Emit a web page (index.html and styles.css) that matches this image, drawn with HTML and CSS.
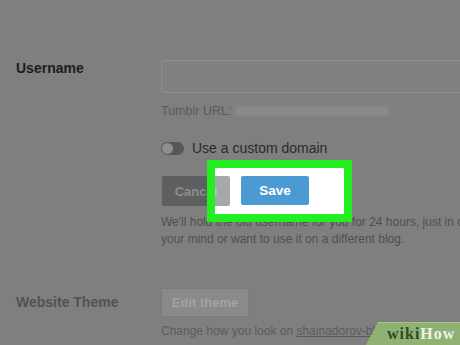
FILE: index.html
```html
<!DOCTYPE html>
<html lang="en">
<head>
<meta charset="UTF-8" />
<meta name="viewport" content="width=device-width, initial-scale=1" />
<title>Account settings</title>
<link rel="stylesheet" href="styles.css">
</head>
<body>
<div class="page">
  <div class="row">
    <div class="label">Username</div>
    <div class="field">
      <input type="text" class="text-input" />
      <div class="hint">Tumblr URL: <span class="blurred"></span></div>
      <div class="toggle-row">
        <span class="toggle"><span class="knob"></span></span>
        <span>Use a custom domain</span>
      </div>
      <div class="buttons">
        <div class="spot-fill"></div>
        <button class="btn cancel">Cancel</button>
        <button class="btn save">Save</button>
        <div class="spot-frame"></div>
      </div>
      <p class="note">We'll hold the old username for you for 24 hours, just in case you change your mind or want to use it on a different blog.</p>
    </div>
  </div>

  <div class="row theme-row">
    <div class="label muted">Website Theme</div>
    <div class="field">
      <button class="btn edit">Edit theme</button>
      <div class="hint change">Change how you look on <u>shainadorov-blog.tumblr.com</u></div>
    </div>
  </div>
</div>

<div class="wikihow"><span class="wiki">wiki</span><span class="how">How</span></div>
</body>
</html>
```

FILE: styles.css
```css
body {
  margin: 0;
  background: #7f7f7f;
  font-family: 'Liberation Sans', Arial, sans-serif;
  color: #2b2b2b;
  overflow: hidden;
  width: 460px;
  height: 345px;
}
.page {
  padding-top: 60px;
}
.row {
  display: flex;
}
.label {
  width: 161px;
  flex-shrink: 0;
  box-sizing: border-box;
  padding-left: 16px;
  font-size: 14px;
  font-weight: bold;
  line-height: 17px;
  color: #1c1c1c;
}
.label.muted {
  color: #525252;
  padding-top: 6px;
}
.field {
  width: 400px;
  flex-shrink: 0;
}
.text-input {
  display: block;
  width: 100%;
  height: 33px;
  box-sizing: border-box;
  margin: 0;
  background: #818181;
  border: 1px solid #8f8f8f;
  border-radius: 2px;
}
.hint {
  margin-top: 10px;
  font-size: 12.5px;
  line-height: 16px;
  color: #5a5a5a;
  white-space: nowrap;
}
.blurred {
  display: inline-block;
  vertical-align: -1px;
  width: 154px;
  height: 10px;
  background: #8a8a8a;
  border-radius: 3px;
  filter: blur(1.5px);
}
.toggle-row {
  margin-top: 20px;
  display: flex;
  align-items: center;
  gap: 8px;
  font-size: 14px;
  line-height: 18px;
  color: #2b2b2b;
}
.toggle {
  width: 23px;
  height: 13px;
  border-radius: 7px;
  background: #575757;
  display: flex;
  align-items: center;
  padding-left: 1px;
  box-sizing: border-box;
}
.knob {
  width: 11px;
  height: 11px;
  border-radius: 50%;
  background: #8d8d8d;
}
.buttons {
  position: relative;
  margin-top: 19px;
  display: flex;
  gap: 11px;
  padding-left: 1px;
}
.btn {
  position: relative;
  z-index: 1;
  height: 30px;
  width: 68px;
  border: none;
  border-radius: 2px;
  font-family: 'Liberation Sans', Arial, sans-serif;
  font-size: 13px;
  font-weight: bold;
  padding: 0;
}
.cancel {
  background: rgba(52, 54, 57, 0.43);
  color: rgba(255, 255, 255, 0.3);
}
.save {
  background: #4c9ad2;
  color: #ffffff;
  height: 29px;
  font-size: 13.5px;
}
.spot-fill {
  position: absolute;
  left: 46px;
  top: -16px;
  width: 145px;
  height: 62px;
  background: #ffffff;
  z-index: 0;
}
.spot-frame {
  position: absolute;
  left: 46px;
  top: -16px;
  width: 145px;
  height: 62px;
  box-sizing: border-box;
  border: 8px solid #22ee22;
  z-index: 2;
}
.note {
  margin: 8px 0 0;
  font-size: 12px;
  line-height: 17px;
  color: #4f4f4f;
}
.theme-row {
  margin-top: 40px;
}
.edit {
  width: 88px;
  height: 29px;
  background: #8a8a8a;
  border: 1px solid #7b7b7b;
  color: #a2a2a2;
}
.change {
  margin-top: 6px;
  font-size: 12px;
  color: #5c5c5c;
}
.wikihow {
  position: absolute;
  right: 0;
  bottom: 0;
  width: 94px;
  height: 23px;
  background: #8fb272;
  border-top: 1px solid #a6c28e;
  clip-path: polygon(12px 0, 100% 0, 100% 100%, 0 100%);
  box-sizing: border-box;
  padding-left: 21px;
  font-family: 'Liberation Serif', 'Times New Roman', serif;
  font-weight: bold;
  font-size: 16px;
  letter-spacing: 1px;
  line-height: 22px;
}
.wiki {
  color: #2f4a25;
}
.how {
  color: #eef3ea;
}
```
